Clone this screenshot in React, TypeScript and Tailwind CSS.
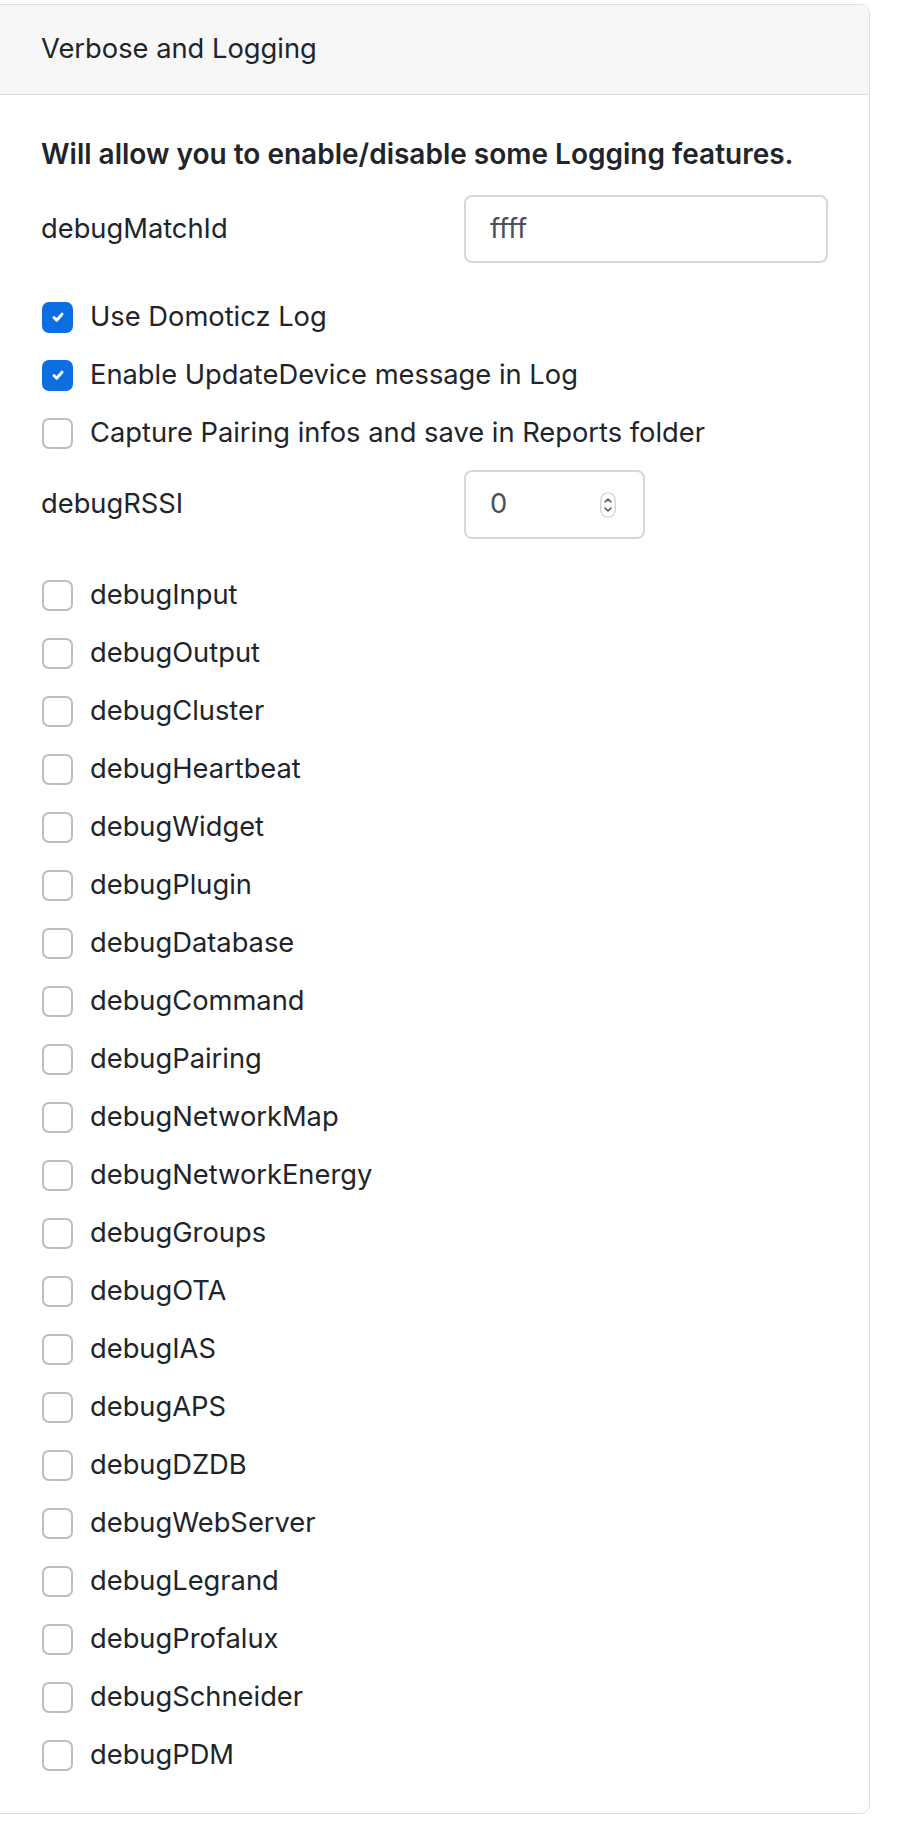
import React from "react";

const DEBUG_FLAGS = [
  "debugInput",
  "debugOutput",
  "debugCluster",
  "debugHeartbeat",
  "debugWidget",
  "debugPlugin",
  "debugDatabase",
  "debugCommand",
  "debugPairing",
  "debugNetworkMap",
  "debugNetworkEnergy",
  "debugGroups",
  "debugOTA",
  "debugIAS",
  "debugAPS",
  "debugDZDB",
  "debugWebServer",
  "debugLegrand",
  "debugProfalux",
  "debugSchneider",
  "debugPDM",
];

function Check({ checked }: { checked: boolean }) {
  if (checked) {
    return (
      <span className="flex h-[31px] w-[31px] shrink-0 items-center justify-center rounded-[7px] bg-[#0b6fe2]">
        <svg width="20" height="20" viewBox="0 0 20 20" fill="none">
          <path d="M6 10.5l2.7 2.7l5.3-6" stroke="#fff" strokeWidth="3" strokeLinecap="round" strokeLinejoin="round" />
        </svg>
      </span>
    );
  }
  return <span className="block h-[31px] w-[31px] shrink-0 rounded-[7px] border-2 border-[#b7bfc7] bg-white" />;
}

function CheckRow({ label, checked = false }: { label: string; checked?: boolean }) {
  return (
    <label className="flex h-[58px] items-center">
      <span className="ml-[1px]">
        <Check checked={checked} />
      </span>
      <span className="ml-[17px]">{label}</span>
    </label>
  );
}

function Spinner() {
  return (
    <svg width="16" height="26" viewBox="0 0 16 26" fill="none">
      <rect x="0.75" y="0.75" width="14.5" height="24.5" rx="7.25" fill="#fff" stroke="#c9ced4" strokeWidth="1.2" />
      <path d="M5 10l3-3l3 3" stroke="#555" strokeWidth="1.5" strokeLinecap="round" strokeLinejoin="round" />
      <path d="M5 16l3 3l3-3" stroke="#555" strokeWidth="1.5" strokeLinecap="round" strokeLinejoin="round" />
    </svg>
  );
}

export default function App() {
  return (
    <div
      className="min-h-[1828px] bg-white pt-[4px] text-[27.3px] leading-[1.5] text-[#212529]"
      style={{ fontFamily: "Inter, 'Noto Sans', sans-serif" }}
    >
      <div className="w-[870px] overflow-hidden rounded-r-[9px] border border-l-0 border-[#dedede]">
        {/* Header */}
        <div className="flex h-[90px] items-center border-b border-[#dedede] bg-[#f7f7f7] pl-[41px]">
          Verbose and Logging
        </div>

        {/* Body */}
        <div className="pb-[29px] pl-[41px] pt-[39px]">
          <p className="h-[40px] text-[28px] leading-[40px] font-semibold">
            Will allow you to enable/disable some Logging features.
          </p>

          <div className="mt-[21px] flex h-[68px] items-center">
            <span className="w-[423px]">debugMatchId</span>
            <div className="flex h-[68px] w-[364px] items-center rounded-[8px] border-2 border-[#d3d8dd] pl-[24px] text-[#495057]">
              ffff
            </div>
          </div>

          <div className="mt-[25px]">
            <CheckRow label="Use Domoticz Log" checked />
            <CheckRow label="Enable UpdateDevice message in Log" checked />
            <CheckRow label="Capture Pairing infos and save in Reports folder" />
          </div>

          <div className="mt-[8px] flex h-[69px] items-center">
            <span className="w-[423px]">debugRSSI</span>
            <div className="flex h-[69px] w-[181px] items-center justify-between rounded-[8px] border-2 border-[#d3d8dd] pl-[24px] pr-[27px] text-[#495057]">
              <span>0</span>
              <Spinner />
            </div>
          </div>

          <div className="mt-[27px]">
            {DEBUG_FLAGS.map((f) => (
              <CheckRow key={f} label={f} />
            ))}
          </div>
        </div>
      </div>
    </div>
  );
}
